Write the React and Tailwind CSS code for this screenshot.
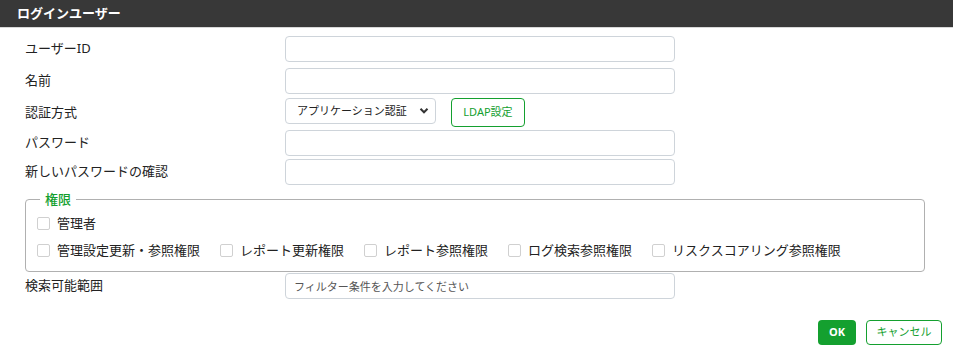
import { useState } from 'react';

const perms = [
  '管理設定更新・参照権限',
  'レポート更新権限',
  'レポート参照権限',
  'ログ検索参照権限',
  'リスクスコアリング参照権限',
];

function Check({ label, checked, onChange }) {
  return (
    <label className="flex items-center gap-[7px] cursor-pointer">
      <input
        type="checkbox"
        checked={checked}
        onChange={onChange}
        className="appearance-none w-[13px] h-[13px] border border-[#d0d0d0] rounded-[2px] bg-white checked:bg-[#14a02f]"
      />
      <span>{label}</span>
    </label>
  );
}

function Row({ label, children, className = '' }) {
  return (
    <div className={`flex items-center ${className}`}>
      <div className="w-[285px] pl-[25px]">{label}</div>
      {children}
    </div>
  );
}

const inputCls = 'w-[390px] h-[26px] border border-[#ced4da] rounded-[4px] px-2 text-[11px] outline-none';

export default function App() {
  const [checks, setChecks] = useState({});
  const toggle = (k) => setChecks((c) => ({ ...c, [k]: !c[k] }));

  return (
    <div className="w-[953px] h-[352px] bg-white text-[13px] text-[#222] font-['Noto_Sans','Noto_Sans_CJK_JP',sans-serif]">
      <div className="h-[28px] bg-[#383838] border-b border-[#d8d8d8] flex items-center pl-[17px]">
        <span className="text-white font-bold text-[13px]">ログインユーザー</span>
      </div>

      <Row label="ユーザーID" className="mt-[8px]">
        <input className={inputCls} />
      </Row>
      <Row label="名前" className="mt-[6px]">
        <input className={inputCls} />
      </Row>
      <Row label="認証方式" className="mt-[4px]">
        <div className="relative h-[26px] self-start">
          <select className="appearance-none w-[151px] h-[26px] border border-[#ced4da] rounded-[4px] pl-[11px] pr-0 text-[11px] bg-white outline-none">
            <option>アプリケーション認証</option>
            <option>LDAP認証</option>
          </select>
          <svg className="absolute right-[7px] top-[9px] pointer-events-none" width="10" height="8" viewBox="0 0 10 8">
            <path d="M1.5 1.8 L5 5.3 L8.5 1.8" fill="none" stroke="#333" strokeWidth="2" />
          </svg>
        </div>
        <button className="ml-[15px] h-[29px] w-[74px] border border-[#14a02f] rounded-[4px] text-[#14a02f] text-[11px]">
          LDAP設定
        </button>
      </Row>
      <Row label="パスワード" className="mt-[3px]">
        <input type="password" className={inputCls} />
      </Row>
      <Row label="新しいパスワードの確認" className="mt-[3px]">
        <input type="password" className={inputCls} />
      </Row>

      <fieldset className="mx-[25px] w-[900px] mt-[7px] h-[80px] border border-[#b0b0b0] rounded-[4px] pl-[11px] pt-0">
        <legend className="ml-[3px] px-[5px] text-[#14a02f] text-[13px] leading-[14px] font-medium">権限</legend>
        <div className="mt-[8px]">
          <Check label="管理者" checked={!!checks.admin} onChange={() => toggle('admin')} />
        </div>
        <div className="flex items-center gap-[20px] mt-[7px]">
          {perms.map((p) => (
            <Check key={p} label={p} checked={!!checks[p]} onChange={() => toggle(p)} />
          ))}
        </div>
      </fieldset>

      <Row label="検索可能範囲" className="mt-[1px]">
        <input className={`${inputCls} h-[25px] placeholder:text-[#555]`} placeholder="フィルター条件を入力してください" />
      </Row>

      <div className="flex justify-end gap-[10px] pr-[11px] mt-[21px]">
        <button className="h-[25px] w-[38px] bg-[#14a02f] text-white rounded-[4px] text-[11px] font-bold">OK</button>
        <button className="h-[25px] w-[76px] border border-[#14a02f] text-[#14a02f] rounded-[4px] text-[11px]">キャンセル</button>
      </div>
    </div>
  );
}
